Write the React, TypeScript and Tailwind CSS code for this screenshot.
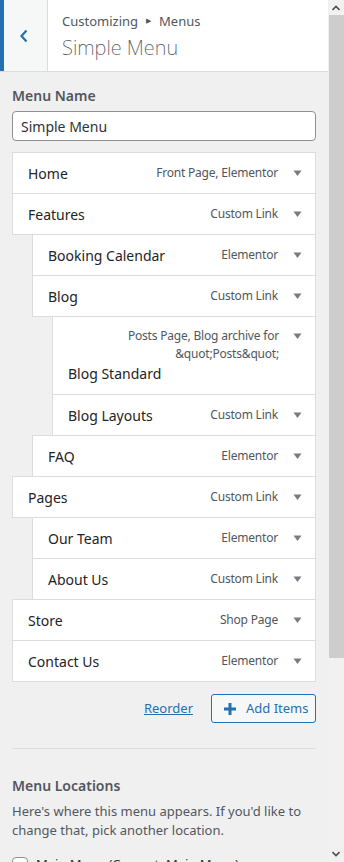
import React from 'react';

type Item = { title: string; type: string; level: number };

const items: Item[] = [
  { title: 'Home', type: 'Front Page, Elementor', level: 0 },
  { title: 'Features', type: 'Custom Link', level: 0 },
  { title: 'Booking Calendar', type: 'Elementor', level: 1 },
  { title: 'Blog', type: 'Custom Link', level: 1 },
  { title: 'Blog Standard', type: 'Posts Page, Blog archive for &quot;Posts&quot;', level: 2 },
  { title: 'Blog Layouts', type: 'Custom Link', level: 2 },
  { title: 'FAQ', type: 'Elementor', level: 1 },
  { title: 'Pages', type: 'Custom Link', level: 0 },
  { title: 'Our Team', type: 'Elementor', level: 1 },
  { title: 'About Us', type: 'Custom Link', level: 1 },
  { title: 'Store', type: 'Shop Page', level: 0 },
  { title: 'Contact Us', type: 'Elementor', level: 0 },
];

const indent = ['ml-0', 'ml-[20px]', 'ml-[40px]'];

const Arrow = () => (
  <svg width="9" height="7" viewBox="0 0 9 7" className="shrink-0">
    <path d="M0.5 0.5h8L4.5 6z" fill="#787c82" />
  </svg>
);

const MenuItem: React.FC<{ item: Item; first: boolean }> = ({ item, first }) => {
  const long = item.type.length > 25;
  return (
    <div
      className={`${indent[item.level]} ${first ? '' : '-mt-px'} border border-[#dcdcde] bg-white`}
    >
      {long ? (
        <div className="pl-[15px] pr-[13px] pt-[10px] pb-[10px]">
          <div className="flex justify-end items-start">
            <span className="text-[12px] leading-[18px] text-[#50575e] text-right w-[190px] mr-[14px] tracking-[-0.2px]">
              {item.type}
            </span>
            <span className="mt-[6px]">
              <Arrow />
            </span>
          </div>
          <div className="text-[14px] leading-[20px] text-[#1d2327] mt-[1px]">{item.title}</div>
        </div>
      ) : (
        <div className="h-[40px] flex items-center pl-[15px] pr-[13px]">
          <span className="flex-1 text-[14px] text-[#1d2327]">{item.title}</span>
          <span className="text-[12px] text-[#50575e] mr-[15px] tracking-[-0.2px]">{item.type}</span>
          <Arrow />
        </div>
      )}
    </div>
  );
};

export default function App() {
  return (
    <div
      className="flex h-[862px] w-[344px] overflow-hidden bg-[#f0f0f1] text-[#50575e]"
      style={{ fontFamily: '"Noto Sans", "Open Sans", sans-serif' }}
    >
      <div className="w-[328px] flex flex-col">
        {/* header */}
        <div className="flex h-[72px] bg-white border-b border-[#dcdcde] shrink-0">
          <div className="w-[48px] border-l-4 border-l-[#2271b1] border-r border-r-[#dcdcde] bg-[#f6f7f7] flex items-center justify-center pr-[4px]">
            <svg width="10" height="14" viewBox="0 0 10 14">
              <path d="M7.5 1.5L2.5 7l5 5.5" stroke="#2271b1" strokeWidth="2.2" fill="none" />
            </svg>
          </div>
          <div className="pl-[14px] pt-[12px]">
            <div className="text-[13px] leading-[18px] text-[#50575e] flex items-center">
              Customizing
              <span className="text-[7px] mx-[8px] text-[#50575e]">▶</span>
              Menus
            </div>
            <div className="text-[20px] leading-[28px] font-extralight text-[#50575e] mt-[4px]">
              Simple Menu
            </div>
          </div>
        </div>

        {/* body */}
        <div className="px-[12px] pt-[14px]">
          <div className="text-[14px] font-semibold leading-[20px] text-[#50575e]">Menu Name</div>
          <div className="mt-[5px] h-[30px] border border-[#8c8f94] rounded-[4px] bg-white flex items-center px-[8px] text-[14px] text-[#2c3338]">
            Simple Menu
          </div>

          <div className="mt-[11px]">
            {items.map((it, i) => (
              <MenuItem key={i} item={it} first={i === 0} />
            ))}
          </div>

          <div className="flex justify-end items-center gap-[18px] mt-[12px]">
            <span className="text-[13px] text-[#2271b1] underline">Reorder</span>
            <div className="h-[29px] w-[105px] border border-[#2271b1] rounded-[3px] bg-[#f6f7f7] flex items-center pl-[10px] text-[13px] text-[#2271b1]">
              <svg width="16" height="16" viewBox="0 0 16 16" className="mr-[8px]">
                <path d="M8 2v12M2 8h12" stroke="#2271b1" strokeWidth="3" />
              </svg>
              Add Items
            </div>
          </div>

          <div className="border-t border-[#dcdcde] mt-[25px]" />

          <div className="mt-[27px] text-[14px] font-semibold leading-[20px] text-[#50575e]">Menu Locations</div>
          <div className="mt-[6px] text-[13px] leading-[19px] text-[#50575e]">
            Here's where this menu appears. If you'd like to change that, pick another location.
          </div>
          <div className="mt-[15px] flex items-center gap-[8px] text-[13px] text-[#2c3338]">
            <span className="w-[16px] h-[16px] border border-[#8c8f94] rounded-[4px] bg-white" />
            Main Menu (Current: Main Menu)
          </div>
        </div>
      </div>

      {/* scrollbar */}
      <div className="w-[16px] bg-[#f1f1f1] flex flex-col items-center">
        <div className="h-[15px] flex items-center justify-center">
          <svg width="8" height="6" viewBox="0 0 8 6">
            <path d="M0.5 5L4 1.5 7.5 5" stroke="#505050" strokeWidth="1.6" fill="none" />
          </svg>
        </div>
        <div className="w-[15px] h-[643px] bg-[#cdcdcd]" />
        <div className="flex-1" />
        <div className="h-[17px] flex items-center justify-center">
          <svg width="8" height="6" viewBox="0 0 8 6">
            <path d="M0.5 1L4 4.5 7.5 1" stroke="#505050" strokeWidth="1.6" fill="none" />
          </svg>
        </div>
      </div>
    </div>
  );
}
